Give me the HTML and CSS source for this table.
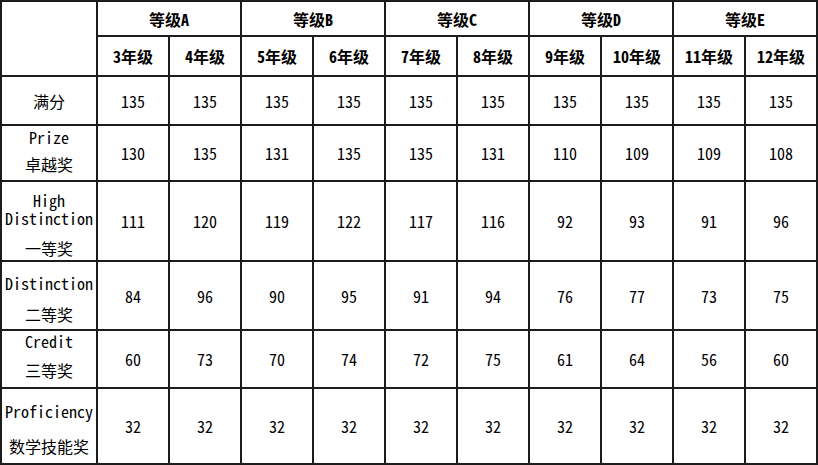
FILE: index.html
```html
<!DOCTYPE html>
<html lang="zh-CN">
<head>
<meta charset="utf-8">
<title>等级分数线</title>
<link rel="stylesheet" href="styles.css">
</head>
<body>
<table class="grid">
  <colgroup>
    <col class="c-label">
    <col class="c-num"><col class="c-num"><col class="c-num"><col class="c-num"><col class="c-num">
    <col class="c-num"><col class="c-num"><col class="c-num"><col class="c-num"><col class="c-num">
  </colgroup>
  <thead>
    <tr class="h1">
      <th rowspan="2"></th>
      <th colspan="2">等级A</th>
      <th colspan="2">等级B</th>
      <th colspan="2">等级C</th>
      <th colspan="2">等级D</th>
      <th colspan="2">等级E</th>
    </tr>
    <tr class="h2">
      <th>3年级</th><th>4年级</th><th>5年级</th><th>6年级</th><th>7年级</th>
      <th>8年级</th><th>9年级</th><th>10年级</th><th>11年级</th><th>12年级</th>
    </tr>
  </thead>
  <tbody>
    <tr class="r-full">
      <td class="lab"><div class="label"><span class="zh solo">满分</span></div></td>
      <td>135</td><td>135</td><td>135</td><td>135</td><td>135</td><td>135</td><td>135</td><td>135</td><td>135</td><td>135</td>
    </tr>
    <tr class="r-prize">
      <td class="lab"><div class="label"><span class="en">Prize</span><span class="zh">卓越奖</span></div></td>
      <td>130</td><td>135</td><td>131</td><td>135</td><td>135</td><td>131</td><td>110</td><td>109</td><td>109</td><td>108</td>
    </tr>
    <tr class="r-high">
      <td class="lab"><div class="label"><span class="en">High Distinction</span><span class="zh">一等奖</span></div></td>
      <td>111</td><td>120</td><td>119</td><td>122</td><td>117</td><td>116</td><td>92</td><td>93</td><td>91</td><td>96</td>
    </tr>
    <tr class="r-dist">
      <td class="lab"><div class="label"><span class="en">Distinction</span><span class="zh">二等奖</span></div></td>
      <td>84</td><td>96</td><td>90</td><td>95</td><td>91</td><td>94</td><td>76</td><td>77</td><td>73</td><td>75</td>
    </tr>
    <tr class="r-credit">
      <td class="lab"><div class="label"><span class="en">Credit</span><span class="zh">三等奖</span></div></td>
      <td>60</td><td>73</td><td>70</td><td>74</td><td>72</td><td>75</td><td>61</td><td>64</td><td>56</td><td>60</td>
    </tr>
    <tr class="r-prof">
      <td class="lab"><div class="label"><span class="en">Proficiency</span><span class="zh">数学技能奖</span></div></td>
      <td>32</td><td>32</td><td>32</td><td>32</td><td>32</td><td>32</td><td>32</td><td>32</td><td>32</td><td>32</td>
    </tr>
  </tbody>
</table>
</body>
</html>
```

FILE: styles.css
```css
html, body {
  margin: 0;
  padding: 0;
  background: #ffffff;
}

body {
  font-family: "Noto Sans Mono CJK SC", "Noto Sans CJK SC", "DejaVu Sans Mono", monospace;
  font-size: 16px;
  color: #000;
}

.grid {
  border-collapse: collapse;
  table-layout: fixed;
  width: 816px;
}

.c-label { width: 96px; }
.c-num { width: 72px; }

.grid th,
.grid td {
  border: 2px solid #1c1c1c;
  padding: 0 1px;
  text-align: center;
  vertical-align: middle;
  line-height: 18px;
}

.grid th {
  font-weight: bold;
}

.grid td {
  font-weight: normal;
}

.h1 { height: 35px; }
.h2 { height: 40px; }
.r-full { height: 49px; }
.r-prize { height: 56px; }
.r-high { height: 80px; }
.r-dist { height: 69px; }
.r-credit { height: 58px; }
.r-prof { height: 76px; }

.label {
  display: flex;
  flex-direction: column;
  align-items: center;
}

.en {
  line-height: 18px;
}

.zh {
  line-height: 20px;
  margin-top: 10px;
}

.zh.solo {
  margin-top: 0;
}

.r-prize .zh { margin-top: 8px; }
.r-prize .label { padding-bottom: 5px; }

.r-high .zh { margin-top: 11px; }
.r-high .label { padding-top: 7px; }

.r-dist .zh { margin-top: 12px; }
.r-dist .label { padding-top: 6px; }

.r-credit .zh { margin-top: 10px; }
.r-credit .label { padding-bottom: 7px; }

.r-prof .zh { margin-top: 16px; }
.r-prof .label { padding-top: 5px; }
```
